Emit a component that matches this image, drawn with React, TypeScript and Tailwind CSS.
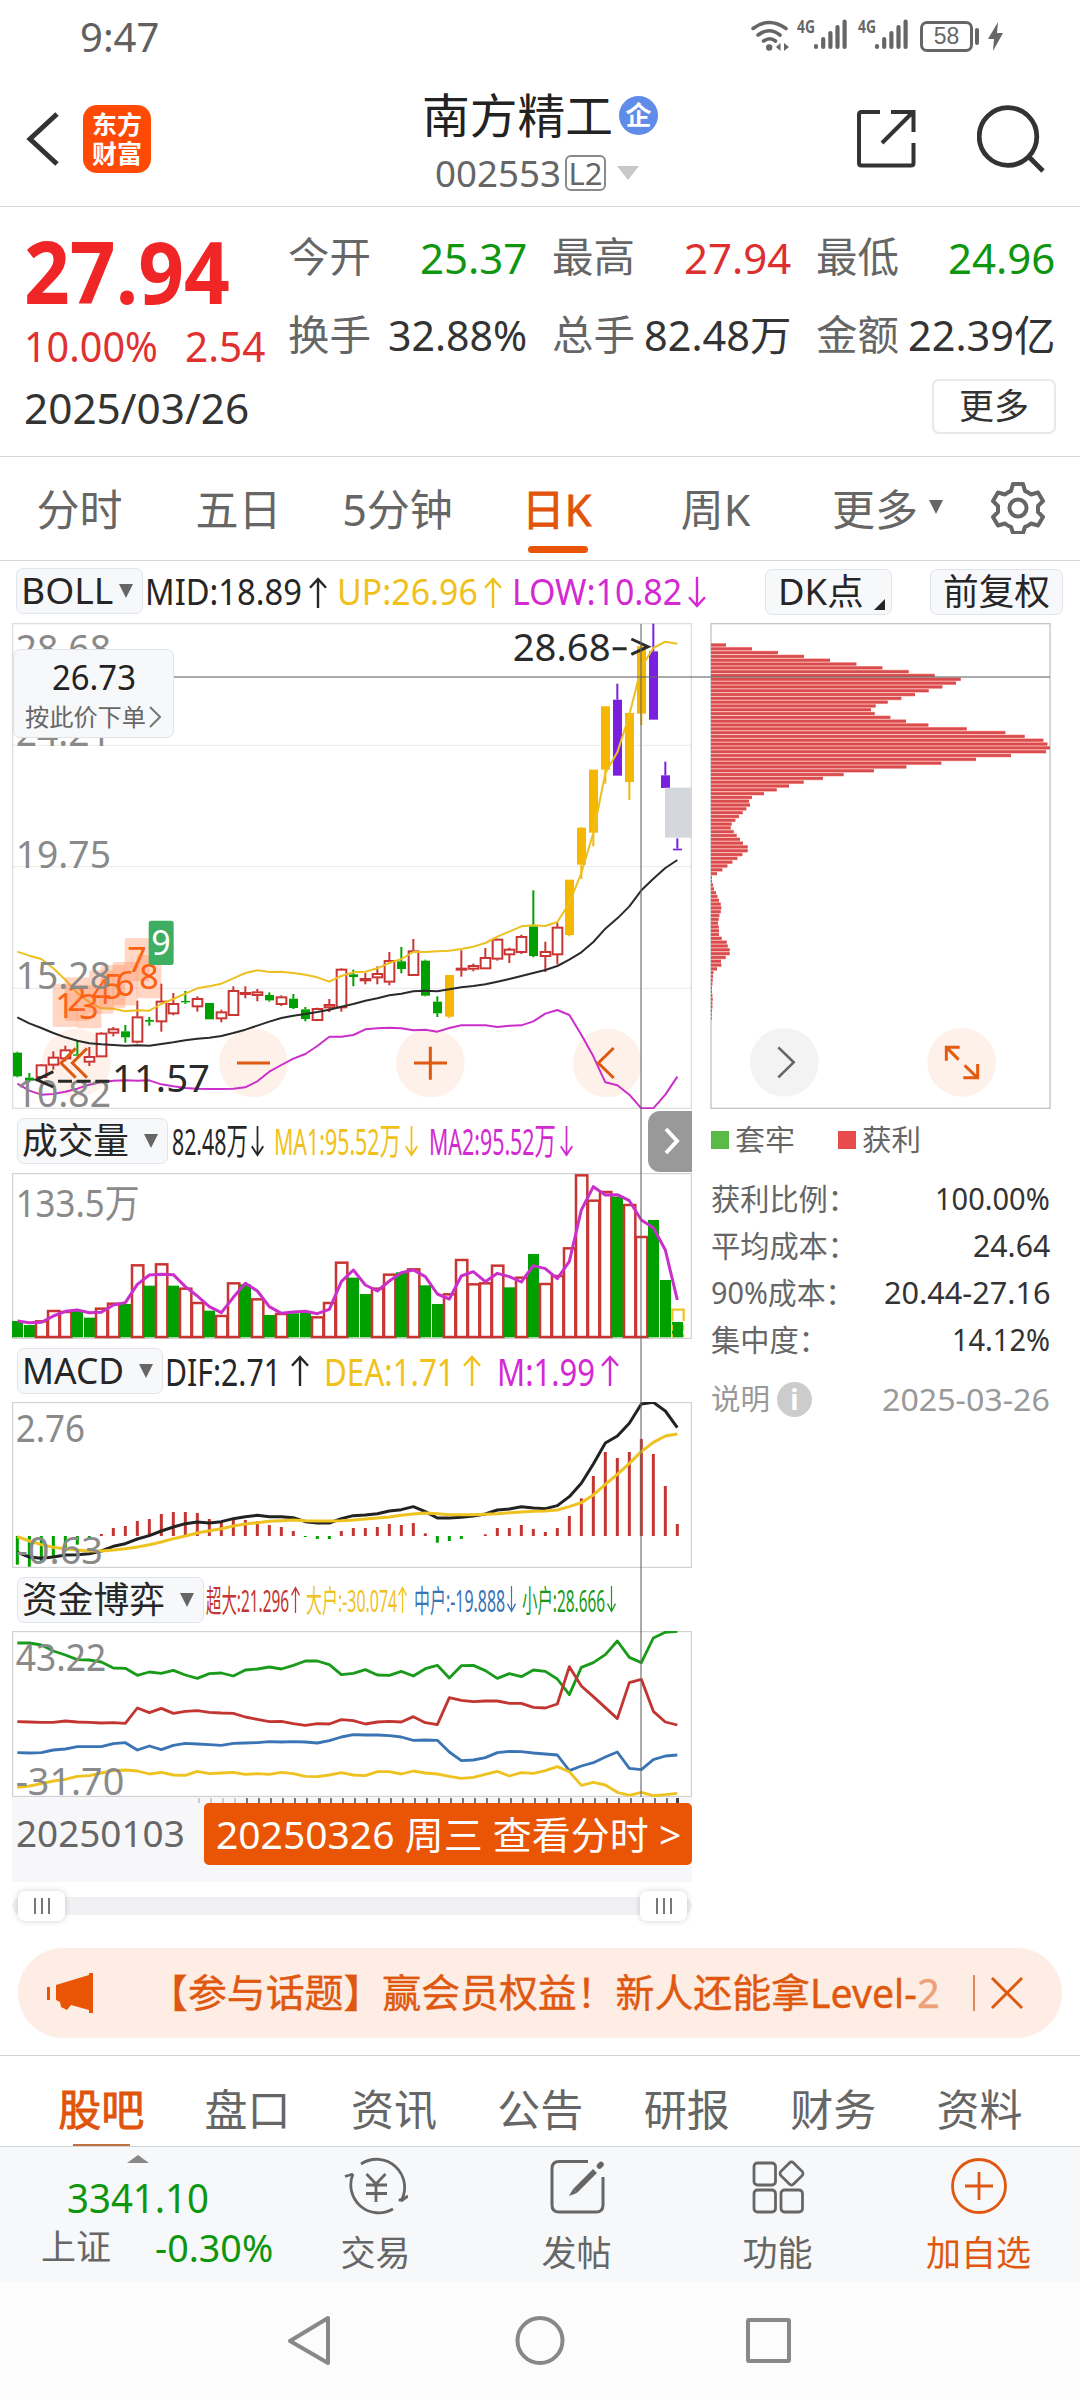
import { useLayoutEffect, useRef, type ReactNode } from "react";

// one line of text squeezed or stretched to a fixed width
function Fit({ w, className = "", children }: { w: number; className?: string; children: ReactNode }) {
  const ref = useRef<HTMLSpanElement>(null);

  useLayoutEffect(() => {
    const el = ref.current;
    if (el) el.style.transform = `scaleX(${w / el.offsetWidth})`;
  }, [w, children]);

  return (
    <span className={`inline-block shrink-0 ${className}`} style={{ width: w }}>
      <span ref={ref} className="inline-block origin-left whitespace-nowrap">
        {children}
      </span>
    </span>
  );
}

// chart coordinates are in thirds of a pixel, candles are 36 units apart
const X0 = 52;
const STEP = 36;
const cx = (i: number) => X0 + i * STEP;
const line = (ys: number[]) => ys.map((y, i) => `${cx(i)},${y}`).join(" ");

type Candle = [string, number, number, number, number];

// kind, high, body top, body bottom, low
const candles: Candle[] = [
  ["g", 1326, 1329, 1400, 1403], ["g", 1390, 1404, 1413, 1418], ["r", 1363, 1365, 1404, 1404], ["r", 1325, 1342, 1367, 1380],
  ["r", 1308, 1320, 1348, 1355], ["g", 1292, 1334, 1338, 1340], ["r", 1312, 1340, 1358, 1369], ["r", 1268, 1270, 1342, 1342],
  ["r", 1252, 1257, 1271, 1280], ["g", 1246, 1265, 1283, 1299], ["r", 1173, 1221, 1298, 1301], ["g", 1222, 1231, 1236, 1248],
  ["r", 1122, 1174, 1237, 1266], ["r", 1150, 1181, 1213, 1217], ["g", 1144, 1174, 1178, 1183], ["r", 1160, 1166, 1192, 1206],
  ["g", 1180, 1180, 1229, 1229], ["r", 1200, 1206, 1228, 1238], ["r", 1130, 1142, 1218, 1218], ["r", 1130, 1148, 1155, 1166],
  ["r", 1138, 1146, 1158, 1175], ["g", 1148, 1156, 1172, 1176], ["r", 1157, 1161, 1185, 1189], ["g", 1153, 1167, 1195, 1198],
  ["g", 1192, 1199, 1228, 1235], ["r", 1194, 1196, 1233, 1233], ["r", 1168, 1184, 1195, 1207], ["r", 1076, 1078, 1195, 1206],
  ["g", 1080, 1094, 1102, 1130], ["r", 1090, 1106, 1114, 1124], ["r", 1070, 1091, 1105, 1124], ["r", 1027, 1052, 1118, 1127],
  ["g", 1012, 1055, 1078, 1091], ["r", 988, 1023, 1098, 1098], ["g", 1050, 1053, 1158, 1160], ["g", 1160, 1176, 1211, 1222],
  ["y", 1096, 1096, 1221, 1225], ["r", 1022, 1075, 1082, 1101], ["r", 1062, 1067, 1079, 1085], ["r", 1015, 1043, 1078, 1078],
  ["r", 987, 988, 1049, 1053], ["r", 1014, 1018, 1036, 1060], ["r", 975, 980, 1029, 1033], ["g", 842, 950, 1039, 1043],
  ["r", 996, 1025, 1041, 1087], ["r", 940, 952, 1036, 1064], ["y", 810, 810, 976, 980], ["y", 652, 654, 765, 808],
  ["y", 480, 480, 669, 710], ["y", 289, 290, 480, 522], ["p", 222, 270, 498, 498], ["y", 309, 310, 517, 571],
  ["y", 105, 110, 312, 346], ["p", 42, 125, 330, 330], ["p", 456, 497, 535, 535], ["p", 686, 717, 722, 722],
];

const upBand = [
  1026, 1038, 1048, 1076, 1110, 1150, 1178, 1196, 1197, 1205, 1202, 1203, 1183, 1168, 1152, 1136, 1130, 1122, 1106, 1090, 1082, 1087,
  1086, 1090, 1095, 1103, 1116, 1099, 1088, 1086, 1076, 1060, 1048, 1027, 1027, 1025, 1023, 1018, 1011, 1000, 981, 966, 950, 947, 949,
  937, 880, 790, 670, 490, 428, 316, 172, 115, 96, 102,
];
const midBand = [
  1223, 1241, 1255, 1270, 1283, 1293, 1301, 1304, 1306, 1308, 1307, 1308, 1303, 1298, 1292, 1287, 1284, 1279, 1270, 1260, 1248, 1236,
  1225, 1218, 1213, 1207, 1200, 1191, 1183, 1173, 1166, 1157, 1152, 1145, 1143, 1145, 1139, 1133, 1129, 1124, 1116, 1108, 1099, 1090,
  1081, 1069, 1050, 1028, 997, 957, 926, 890, 842, 807, 775, 751,
];
const lowBand = [
  1422, 1443, 1455, 1453, 1446, 1437, 1425, 1417, 1413, 1412, 1413, 1412, 1424, 1430, 1435, 1437, 1438, 1438, 1437, 1433, 1415, 1386,
  1366, 1347, 1333, 1309, 1281, 1281, 1276, 1259, 1256, 1254, 1256, 1262, 1260, 1266, 1255, 1247, 1247, 1247, 1252, 1248, 1247, 1235,
  1212, 1201, 1216, 1275, 1340, 1418, 1427, 1455, 1496, 1496, 1455, 1401,
];

const volumes: [string, number][] = [
  ["g", 663], ["g", 675], ["r", 660], ["r", 629], ["r", 632], ["g", 632], ["g", 653], ["r", 622], ["r", 607], ["g", 612],
  ["r", 492], ["g", 557], ["r", 489], ["g", 557], ["r", 562], ["r", 605], ["g", 632], ["r", 644], ["r", 546], ["g", 553],
  ["r", 594], ["g", 645], ["r", 638], ["g", 640], ["g", 638], ["r", 648], ["r", 605], ["r", 484], ["g", 533], ["g", 582],
  ["r", 562], ["r", 520], ["g", 517], ["r", 504], ["g", 556], ["g", 612], ["r", 579], ["r", 476], ["r", 549], ["r", 546],
  ["r", 493], ["g", 562], ["r", 529], ["g", 462], ["r", 548], ["r", 524], ["r", 441], ["r", 222], ["r", 298], ["r", 272],
  ["g", 290], ["r", 311], ["r", 407], ["g", 360], ["g", 540], ["g", 666],
];
const volumeMa = [
  663, 668, 667, 648, 634, 630, 638, 637, 615, 608, 553, 525, 523, 524, 560, 588, 620, 638, 592, 550, 573, 620, 640, 636, 634, 641,
  628, 545, 510, 555, 573, 543, 518, 510, 530, 582, 597, 528, 515, 545, 520, 530, 546, 497, 506, 536, 484, 330, 260, 285, 284, 302,
  360, 383, 450, 600,
];

const macdBars = [
  674, 680, 665, 648, 630, 614, 600, 582, 564, 558, 543, 537, 522, 516, 516, 519, 537, 546, 540, 540, 543, 555, 561, 573, 591, 597,
  597, 573, 564, 564, 561, 552, 555, 549, 580, 608, 603, 597, 588, 583, 564, 564, 555, 567, 576, 564, 528, 475, 408, 336, 354, 336,
  297, 342, 438, 552,
];
const dif = [
  637, 651, 655, 651, 645, 644, 641, 633, 619, 611, 597, 587, 573, 561, 551, 546, 549, 545, 536, 530, 526, 530, 530, 533, 545, 549,
  549, 536, 527, 525, 521, 513, 509, 500, 515, 534, 534, 532, 528, 522, 510, 507, 500, 504, 506, 497, 470, 430, 372, 309, 288, 250,
  192, 187, 213, 263,
];
const dea = [
  590, 603, 614, 622, 627, 630, 633, 633, 630, 626, 621, 614, 606, 596, 588, 579, 572, 566, 558, 552, 548, 544, 542, 540, 542, 543,
  543, 542, 540, 537, 534, 531, 526, 522, 519, 521, 524, 524, 524, 523, 521, 518, 516, 514, 513, 510, 500, 488, 465, 433, 403, 370,
  335, 307, 288, 282,
];

const fundLines: [string, number[]][] = [
  ["#1a9a1a", [
    219, 219, 225, 243, 255, 269, 270, 276, 294, 295, 316, 306, 310, 301, 315, 325, 311, 309, 318, 300, 297, 291, 297, 286, 273, 273,
    284, 314, 310, 299, 315, 316, 304, 318, 296, 286, 324, 287, 286, 302, 325, 311, 320, 300, 304, 327, 374, 292, 278, 254, 213, 262,
    278, 204, 187, 184,
  ]],
  ["#c23531", [
    455, 456, 457, 457, 453, 456, 457, 459, 458, 460, 414, 428, 415, 430, 424, 422, 427, 429, 430, 441, 448, 455, 454, 461, 466, 461,
    462, 449, 452, 462, 456, 454, 456, 440, 458, 464, 383, 391, 395, 393, 393, 400, 400, 412, 414, 402, 290, 348, 380, 413, 446, 338,
    328, 424, 456, 465,
  ]],
  ["#3a74b4", [
    548, 549, 548, 540, 537, 530, 530, 530, 521, 518, 540, 528, 539, 526, 520, 522, 524, 526, 520, 519, 518, 515, 516, 515, 516, 519,
    512, 501, 494, 495, 495, 497, 501, 511, 510, 511, 546, 572, 570, 563, 548, 544, 545, 549, 552, 555, 602, 588, 578, 561, 546, 595,
    599, 569, 558, 555,
  ]],
  ["#eec21f", [
    652, 648, 641, 633, 628, 619, 617, 609, 602, 600, 603, 612, 607, 615, 616, 604, 611, 609, 607, 613, 611, 613, 607, 611, 619, 620,
    615, 608, 615, 617, 605, 605, 612, 603, 609, 612, 619, 625, 622, 613, 604, 618, 608, 610, 602, 590, 605, 646, 637, 645, 667, 676,
    667, 677, 674, 670,
  ]],
];

// right edge of every row of the cost distribution
const chips = [
  108, 186, 264, 342, 420, 499, 577, 656, 734, 812, 798, 757, 716, 675, 634, 593, 557, 543, 554, 601, 648, 715, 830, 946, 1004, 1060,
  1072, 1080, 1068, 963, 858, 754, 649, 552, 461, 399, 341, 297, 260, 222, 186, 177, 180, 169, 158, 147, 136, 125, 122, 131, 140, 150,
  159, 173, 173, 157, 142, 127, 112, 97, 81, 66, 66, 69, 72, 78, 82, 87, 92, 94, 92, 88, 86, 84, 86, 87, 87, 95, 110, 113, 119, 119,
  107, 93, 94, 81, 70, 69, 68, 67, 66, 66, 67, 68, 67, 67, 66, 65, 65,
];

// label, left, top
const sequence: [string, number, number][] = [
  ["1", 158, 1122], ["2", 194, 1103], ["3", 230, 1126], ["4", 267, 1082], ["5", 302, 1066], ["6", 338, 1057], ["7", 374, 985], ["8", 410, 1036],
];

const colors: Record<string, string> = { r: "#c93532", g: "#00a000", y: "#f5b700", p: "#7a1fe0" };

function ScaleLabel({ y, w, children }: { y: number; w: number; children: string }) {
  return (
    <text x="47" y={y} textLength={w} lengthAdjust="spacingAndGlyphs" fontSize="117" fill="#8a8a8a">
      {children}
    </text>
  );
}

function KChart() {
  return (
    <svg className="block h-[486px] w-[680px]" viewBox="36 40 2040 1458">
      <rect x="38" y="42" width="2036" height="1454" fill="none" stroke="#dedede" strokeWidth="4" />
      {[407, 771, 1136].map((y) => (
        <line key={y} x1="38" x2="2076" y1={y} y2={y} stroke="#d4d4d4" strokeWidth="3" strokeDasharray="3 3" />
      ))}
      <circle cx="229" cy="1360" r="103" fill="#fef1ea" />
      <circle cx="760" cy="1360" r="103" fill="#fef1ea" />
      <circle cx="1291" cy="1360" r="103" fill="#fef1ea" />
      <circle cx="1822" cy="1360" r="103" fill="#fef1ea" />

      {candles.map(([kind, high, top, bottom, low], i) => {
        const c = colors[kind];
        const x = cx(i);
        return (
          <g key={i}>
            <line x1={x} x2={x} y1={high} y2={top} stroke={c} strokeWidth="6" />
            <line x1={x} x2={x} y1={bottom} y2={low} stroke={c} strokeWidth="6" />
            {kind === "r" ? (
              <rect x={x - 14} y={top + 2} width="29" height={Math.max(bottom - top - 4, 2)} fill="#fff" stroke={c} strokeWidth="6" />
            ) : (
              <rect x={x - 13} y={top} width="27" height={bottom - top} fill={c} />
            )}
          </g>
        );
      })}
      <rect x="1995" y="534" width="81" height="150" fill="#d4d8dd" />

      <g fill="none" strokeWidth="6" strokeLinejoin="round">
        <polyline points={line(lowBand)} stroke="#cb2fcb" />
        <polyline points={line(midBand)} stroke="#2a2a2a" />
        <polyline points={line(upBand)} stroke="#ecc01f" />
      </g>

      {sequence.map(([n, x, y]) => (
        <g key={n}>
          <rect x={x} y={y} width="74" height="130" rx="5" fill="#ff7a3c" fillOpacity="0.3" />
          <text x={x + 37} y={y + 102} textAnchor="middle" fontSize="102" fill="#fb5f10">
            {n}
          </text>
        </g>
      ))}
      <rect x="446" y="933" width="75" height="133" rx="7" fill="#3fae63" />
      <text x="483" y="1037" textAnchor="middle" fontSize="102" fill="#fff">9</text>

      <ScaleLabel y={158} w={286}>28.68</ScaleLabel>
      <ScaleLabel y={408} w={286}>24.21</ScaleLabel>
      <ScaleLabel y={775} w={286}>19.75</ScaleLabel>
      <ScaleLabel y={1138} w={286}>15.28</ScaleLabel>
      <ScaleLabel y={1492} w={286}>10.82</ScaleLabel>

      <g fontSize="117" fill="#2a2a2a">
        <text x="1538" y="153" textLength="294" lengthAdjust="spacingAndGlyphs">28.68</text>
        <text x="336" y="1448" textLength="294" lengthAdjust="spacingAndGlyphs">11.57</text>
      </g>
      <g fill="none" stroke="#2a2a2a" strokeWidth="9">
        <path d="M1838 117h42M1894 88l50 23-50 23" />
        <path d="M160 1386l-50 24 50 22M174 1415h42M230 1415h42M286 1415h42" />
      </g>

      <g fill="none" stroke="#dc5a12" strokeWidth="9">
        <path d="M227 1316l-44 44 44 44M261 1316l-44 44 44 44" />
        <path d="M711 1360h99M1242 1360h99M1291 1311v99" />
        <path d="M1841 1315l-46 45 46 45" />
      </g>
    </svg>
  );
}

function VolumeChart() {
  return (
    <svg className="block h-[166px] w-[680px]" viewBox="36 219 2040 498">
      <rect x="38" y="221" width="2036" height="494" fill="none" stroke="#c9c9c9" strokeWidth="3" />
      <ScaleLabel y={352} w={372}>133.5万</ScaleLabel>
      {volumes.map(([kind, y], i) =>
        kind === "r" ? (
          <rect key={i} x={cx(i) - 16} y={y + 4} width="34" height={711 - y - 4} fill="#fff" stroke={colors.r} strokeWidth="7.5" />
        ) : (
          <rect key={i} x={cx(i) - 16} y={y} width="33" height={712 - y} fill={colors.g} />
        ),
      )}
      <path d="M2017 664V629h34v35" fill="none" stroke="#f0c52a" strokeWidth="7" />
      <path d="M2017 674v38M2051 674v38" stroke="#f0c52a" strokeWidth="4" strokeDasharray="18 9" />
      <polyline points={line(volumeMa)} fill="none" stroke="#cb2fcb" strokeWidth="9" strokeLinejoin="round" />
    </svg>
  );
}

function MacdChart() {
  return (
    <svg className="block h-[166px] w-[680px]" viewBox="36 186 2040 498">
      <rect x="38" y="188" width="2036" height="494" fill="none" stroke="#c9c9c9" strokeWidth="3" />
      {macdBars.map((y, i) => (
        <line key={i} x1={cx(i)} x2={cx(i)} y1="588" y2={y} stroke={y > 588 ? colors.g : "#c23531"} strokeWidth="9" />
      ))}
      <g fill="none" strokeWidth="9" strokeLinejoin="round">
        <polyline points={line(dif)} stroke="#222" />
        <polyline points={line(dea)} stroke="#eec21f" />
      </g>
      <ScaleLabel y={307} w={208}>2.76</ScaleLabel>
      <ScaleLabel y={672} w={262}>-0.63</ScaleLabel>
    </svg>
  );
}

function FundChart() {
  return (
    <svg className="block h-[166px] w-[680px]" viewBox="36 183 2040 498">
      <rect x="38" y="185" width="2036" height="494" fill="none" stroke="#c9c9c9" strokeWidth="3" />
      {fundLines.map(([color, ys]) => (
        <polyline key={color} points={line(ys)} fill="none" stroke={color} strokeWidth="8.5" strokeLinejoin="round" />
      ))}
      <ScaleLabel y={303} w={272}>43.22</ScaleLabel>
      <ScaleLabel y={675} w={326}>-31.70</ScaleLabel>
    </svg>
  );
}

function ChipChart() {
  return (
    <svg className="block h-[486px] w-[342px]" viewBox="60 42 1026 1458">
      <rect x="63" y="44" width="1017" height="1454" fill="none" stroke="#c4c4c4" strokeWidth="4" />
      {chips.map((end, i) => {
        const y = 108 + i * 11.43;
        return (
          <g key={i}>
            <rect x="63" y={y - 5.7} width={end - 63} height="11.43" fill="#fba9a6" />
            <rect x="63" y={y - 4} width={end - 63} height="8" fill="#d94c4d" />
          </g>
        );
      })}
      <circle cx="283" cy="1360" r="103" fill="#f3f3f3" />
      <path d="M265 1315l46 45-46 45" fill="none" stroke="#666" strokeWidth="8" />
      <circle cx="815" cy="1360" r="103" fill="#fef1ea" />
      <path d="M769 1355V1315h40M770 1316l36 36M863 1365v41h-43M860 1404l-36-35" fill="none" stroke="#e55a0c" strokeWidth="9" />
    </svg>
  );
}

function Caret({ className = "" }: { className?: string }) {
  return (
    <svg viewBox="0 0 14 14" className={`h-[14px] w-[14px] shrink-0 ${className}`}>
      <path d="M0 0h14L7 14z" fill="currentColor" />
    </svg>
  );
}

function Picker({ w, textW, children, className = "" }: { w: number; textW: number; children: string; className?: string }) {
  return (
    <div
      className={`flex h-[46px] shrink-0 items-center justify-between rounded-[7px] border border-[#e1e4ea] bg-[#f7f8fa] pr-[9px] pl-[4px] ${className}`}
      style={{ width: w }}
    >
      <Fit w={textW} className="text-[36px] leading-[44px] text-[#262626]">{children}</Fit>
      <Caret className="text-[#666]" />
    </div>
  );
}

function Arrow({ down = false, className = "" }: { down?: boolean; className?: string }) {
  return (
    <svg viewBox="0 0 18 32" preserveAspectRatio="none" className={`h-[31px] w-[18px] shrink-0 ${down ? "rotate-180" : ""} ${className}`}>
      <path d="M9 32V2M1 11l8-9 8 9" fill="none" stroke="currentColor" strokeWidth="2.4" />
    </svg>
  );
}

function Signal() {
  return (
    <svg viewBox="0 0 52 34" className="h-[34px] w-[52px] overflow-visible">
      <text x="0" y="15" fontSize="18" fontWeight="700" textLength="18" lengthAdjust="spacingAndGlyphs" fill="#666">4G</text>
      <g stroke="#666" strokeWidth="4.2" strokeLinecap="round">
        <path d="M19 29v-.8M26.200 29v-8M33.400 29V15M40.500 29V9M47.600 29V3.500" />
      </g>
    </svg>
  );
}

function StatusBar() {
  return (
    <div className="flex h-[80px] items-start pr-[77px] pl-[80px] text-[#666]">
      <Fit w={79} className="mt-[13px] text-[40px] leading-[48px] text-[#606060]">9:47</Fit>
      <svg viewBox="0 0 38 34" className="mt-[19px] ml-auto h-[34px] w-[38px]" fill="none" stroke="#666" strokeWidth="3.600" strokeLinecap="round">
        <path d="M2 9.500q16-12 33 0M7 16q11.500-8.500 22 0M12.500 22q6.500-4.500 12 0" />
        <circle cx="18.200" cy="28.500" r="3.200" fill="#666" stroke="none" />
        <path d="M29.500 24v8l-4.500-4zM33 24v8l5-4z" fill="#666" stroke="none" />
      </svg>
      <div className="mt-[18px] ml-[8px]"><Signal /></div>
      <div className="mt-[18px] ml-[9px]"><Signal /></div>
      <div className="mt-[21px] ml-[10px] flex h-[31px] w-[53px] items-center justify-center rounded-[7px] border-[3px] border-[#666]">
        <span className="text-[23px] leading-none font-['Liberation_Sans']">58</span>
      </div>
      <div className="mt-[28px] ml-[2px] h-[17px] w-[4px] rounded-full bg-[#666]" />
      <svg viewBox="0 0 15 29" className="mt-[22px] ml-[9px] h-[29px] w-[15px]">
        <path d="M10 0L0 17h6L5 29 15 11H9z" fill="#666" />
      </svg>
    </div>
  );
}

function Header() {
  return (
    <header className="flex h-[127px] items-start border-b border-[#d6d6d6] pl-[26px]">
      <svg viewBox="0 0 34 56" className="mt-[31px] h-[56px] w-[34px]">
        <path d="M31 3L4 28l27 25" fill="none" stroke="#333" strokeWidth="5" />
      </svg>
      <div className="mt-[25px] ml-[23px] flex h-[68px] w-[68px] flex-col items-center justify-center rounded-[14px] bg-[#ff4a06] text-[25px] leading-[29px] font-bold text-white">
        <span>东方</span>
        <span>财富</span>
      </div>
      <div className="ml-[271px] flex w-[240px] flex-col">
        <div className="flex items-center">
          <Fit w={191} className="text-[47px] leading-[70px] text-[#222]">南方精工</Fit>
          <span className="ml-[6px] flex h-[39px] w-[39px] items-center justify-center rounded-full bg-[#5f8ce8] text-[26px] leading-none font-bold text-white">
            企
          </span>
        </div>
        <div className="mt-[3px] flex items-center pl-[13px] text-[#666]">
          <Fit w={126} className="text-[37px] leading-[40px]">002553</Fit>
          <span className="ml-[4px] flex h-[36px] w-[41px] items-center justify-center rounded-[6px] border-2 border-[#8a8a8a]">
            <Fit w={34} className="text-[31px] leading-[32px]">L2</Fit>
          </span>
          <svg viewBox="0 0 22 14" className="ml-[11px] h-[14px] w-[22px]"><path d="M0 0h22L11 14z" fill="#c8c8c8" /></svg>
        </div>
      </div>
      <svg viewBox="0 0 60 60" className="mt-[29px] ml-[194px] h-[60px] w-[60px] shrink-0" fill="none" stroke="#333" strokeWidth="4">
        <path d="M24 3H5.500Q3 3 3 5.500V54q0 2.500 2.500 2.500H55q2.500 0 2.500-2.500V34M35 3h22.500V23M57 3L26 34" />
      </svg>
      <svg viewBox="0 0 70 70" className="mt-[24px] ml-[61px] h-[70px] w-[70px] shrink-0" fill="none" stroke="#333" strokeWidth="4.800">
        <circle cx="31" cy="32.500" r="28.800" />
        <path d="M52 53l14 14" />
      </svg>
    </header>
  );
}

const stats = [
  { label: "今开", value: "25.37", w: 107, color: "text-[#0f960f]" },
  { label: "最高", value: "27.94", w: 107, color: "text-[#dc3030]" },
  { label: "最低", value: "24.96", w: 107, color: "text-[#0f960f]" },
  { label: "换手", value: "32.88%", w: 139, color: "text-[#333]" },
  { label: "总手", value: "82.48万", w: 147, color: "text-[#333]" },
  { label: "金额", value: "22.39亿", w: 147, color: "text-[#333]" },
];

function Quote() {
  return (
    <section className="h-[250px] border-b border-[#d6d6d6] pr-[24px] pl-[24px]">
      <div className="flex">
        <div className="w-[264px] text-[#e03030]">
          <Fit w={206} className="mt-[18px] text-[86px] leading-[92px] font-bold text-[#f02525]">27.94</Fit>
          <div className="flex text-[41px] leading-[58px]">
            <Fit w={134}>10.00%</Fit>
            <Fit w={80} className="ml-[27px]">2.54</Fit>
          </div>
        </div>
        <div className="mt-[13px] grid grid-cols-[239px_239px_239px] gap-x-[25px]">
          {stats.map((s) => (
            <div key={s.label} className="flex h-[74px] items-center justify-between text-[42px]">
              <Fit w={83} className="text-[41px] text-[#666]">{s.label}</Fit>
              <Fit w={s.w} className={s.color}>{s.value}</Fit>
            </div>
          ))}
        </div>
      </div>
      <div className="mt-[3px] flex items-center justify-between">
        <Fit w={225} className="text-[41px] leading-[60px] text-[#333]">2025/03/26</Fit>
        <button className="h-[55px] w-[124px] -translate-y-[2px] rounded-[7px] border-2 border-[#e8e8e8] text-[35px] leading-[48px] text-[#333]">更多</button>
      </div>
    </section>
  );
}

function PeriodTabs() {
  const tabs = ["分时", "五日", "5分钟", "日K", "周K"];
  return (
    <nav className="flex h-[104px] items-center border-b border-[#d6d6d6] pt-[4px] text-[43px] text-[#666]">
      {tabs.map((t) =>
        t === "日K" ? (
          <div key={t} className="relative w-[159px] text-center text-[#e0550b] [-webkit-text-stroke:0.8px]">
            {t}
            <span className="absolute -bottom-[10px] left-[51px] h-[7px] w-[60px] rounded-full bg-[#e95504]" />
          </div>
        ) : (
          <div key={t} className="w-[159px] text-center">{t}</div>
        ),
      )}
      <span className="ml-[37px]">更多</span>
      <Caret className="ml-[11px] mb-[8px]" />
      <svg viewBox="0 0 54 54" className="mb-[8px] ml-[48px] h-[54px] w-[54px]" fill="none" stroke="#666" strokeWidth="4" strokeLinejoin="round">
        <path d="M22 4h10l2 7q3 1 6 3.500l7-2 5 8.500-5 5v6l5 5-5 8.500-7-2q-3 2.500-6 3.500l-2 6H22l-2-6q-3-1-6-3.500l-7 2-5-8.500 5-5v-6l-5-5 5-8.500 7 2q3-2.500 6-3.500z" />
        <circle cx="27" cy="28" r="8.500" />
      </svg>
    </nav>
  );
}

function MainIndicators() {
  return (
    <div className="flex h-[62px] items-start pt-[7px] text-[36px] leading-[44px]">
      <Picker w={127} textW={92} className="ml-[16px]">BOLL</Picker>
      <div className="flex h-[46px] items-center pt-[2px]">
        <Fit w={157} className="ml-[2px] text-[#262626]">MID:18.89</Fit>
        <Arrow className="ml-[7px] text-[#262626]" />
        <Fit w={141} className="ml-[10px] text-[#f0c11b]">UP:26.96</Fit>
        <Arrow className="ml-[6px] text-[#f0c11b]" />
        <Fit w={170} className="ml-[10px] text-[#d329d3]">LOW:10.82</Fit>
        <Arrow down className="ml-[6px] text-[#d329d3]" />
      </div>
      <div className="mt-[1px] ml-[59px] flex h-[46px] w-[127px] shrink-0 rounded-[7px] border border-[#e1e4ea] bg-[#f7f8fa] pl-[12px]">
        <Fit w={86} className="text-[#262626]">DK点</Fit>
        <svg viewBox="0 0 11 11" className="mt-[29px] ml-[10px] h-[11px] w-[11px]"><path d="M11 0v11H0z" fill="#262626" /></svg>
      </div>
      <div className="mt-[1px] ml-[38px] flex h-[46px] w-[133px] shrink-0 justify-center rounded-[7px] border border-[#e1e4ea] bg-[#f7f8fa] text-[#262626]">
        <Fit w={107}>前复权</Fit>
      </div>
    </div>
  );
}

function Charts() {
  return (
    <div className="w-[680px]">
      <div className="relative">
        <KChart />
        <div className="absolute top-[26px] left-px h-[89px] w-[161px] rounded-[7px] border border-[#dfe2e8] bg-[#f7f8fa]">
          <div className="flex justify-center pt-[7px]">
            <Fit w={84} className="text-[34px] leading-[40px] text-[#222]">26.73</Fit>
          </div>
          <div className="flex items-center pl-[11px] text-[#666]">
            <Fit w={121} className="text-[24px] leading-[40px]">按此价下单</Fit>
            <svg viewBox="0 0 12 22" className="ml-[3px] h-[22px] w-[12px]"><path d="M1 1l10 10L1 21" fill="none" stroke="#777" strokeWidth="2" /></svg>
          </div>
        </div>
      </div>

      <div className="flex h-[64px] items-center pl-[5px] text-[37px] leading-[44px]">
        <Picker w={151} textW={107}>成交量</Picker>
        <Fit w={76} className="ml-[4px] text-[#262626]">82.48万</Fit>
        <Arrow down className="ml-[3px] w-[13px]! text-[#262626]" />
        <Fit w={127} className="ml-[10px] text-[#f0c11b]">MA1:95.52万</Fit>
        <Arrow down className="ml-[4px] w-[13px]! text-[#f0c11b]" />
        <Fit w={127} className="ml-[11px] text-[#d329d3]">MA2:95.52万</Fit>
        <Arrow down className="ml-[4px] w-[13px]! text-[#d329d3]" />
        <div className="ml-auto flex h-[61px] w-[44px] items-center justify-center rounded-l-[12px] bg-[#999] pl-[3px]">
          <svg viewBox="0 0 18 30" className="h-[30px] w-[18px]"><path d="M3 3l11 12L3 27" fill="none" stroke="#fff" strokeWidth="4" /></svg>
        </div>
      </div>
      <VolumeChart />

      <div className="flex h-[63px] items-center pl-[5px] text-[38px] leading-[44px]">
        <Picker w={146} textW={102}>MACD</Picker>
        <Fit w={116} className="ml-[2px] text-[#262626]">DIF:2.71</Fit>
        <Arrow className="ml-[10px] text-[#262626]" />
        <Fit w={131} className="ml-[15px] text-[#f0c11b]">DEA:1.71</Fit>
        <Arrow className="ml-[8px] text-[#f0c11b]" />
        <Fit w={98} className="ml-[16px] text-[#d329d3]">M:1.99</Fit>
        <Arrow className="ml-[6px] text-[#d329d3]" />
      </div>
      <MacdChart />

      <div className="flex h-[63px] items-center pl-[5px] text-[31px] leading-[44px]">
        <Picker w={187} textW={143}>资金博弈</Picker>
        <Fit w={83} className="ml-[2px] text-[#c23531]">超大:21.296</Fit>
        <Arrow className="ml-[2px] h-[27px]! w-[9px]! text-[#c23531]" />
        <Fit w={91} className="ml-[6px] text-[#eec21f]">大户:-30.074</Fit>
        <Arrow className="ml-[1px] h-[27px]! w-[9px]! text-[#eec21f]" />
        <Fit w={91} className="ml-[7px] text-[#3a74b4]">中户:-19.888</Fit>
        <Arrow down className="ml-[2px] h-[27px]! w-[9px]! text-[#3a74b4]" />
        <Fit w={83} className="ml-[6px] text-[#1a9a1a]">小户:28.666</Fit>
        <Arrow down className="ml-[2px] h-[27px]! w-[9px]! text-[#1a9a1a]" />
      </div>
      <FundChart />

      <div className="h-[85px] bg-[#f7f7fa]">
        <svg viewBox="0 0 680 6" className="block h-[6px] w-[680px]">
          {Array.from({ length: 40 }, (_, i) => (
            <rect key={i} x={197 + i * 12 - 11} y="1" width={i === 10 ? 3 : 2} height="5" fill={i < 4 ? "#ccc" : "#777"} />
          ))}
          <rect x="664" y="1" width="3" height="5" fill="#444" />
        </svg>
        <div className="flex items-center">
          <Fit w={169} className="ml-[4px] text-[36px] text-[#666]">20250103</Fit>
          <div className="ml-[19px] flex h-[62px] w-[488px] items-center rounded-[5px] bg-[#e95504] pl-[12px] text-white">
            <Fit w={465} className="text-[38px]">20250326 周三 查看分时 &gt;</Fit>
          </div>
        </div>
      </div>

      <div className="flex h-[48px] items-center">
        <div className="flex h-[18px] w-full items-center justify-between rounded-full bg-[#f1f1f4] pr-[5px] pl-[6px]">
          {["start", "end"].map((k) => (
            <div key={k} className="flex h-[30px] w-[47px] items-center justify-center gap-[5px] rounded-[7px] bg-white shadow-[0_0_6px_rgba(0,0,0,0.18)]">
              <i className="h-[16px] w-[2px] bg-[#777]" />
              <i className="h-[16px] w-[2px] bg-[#777]" />
              <i className="h-[16px] w-[2px] bg-[#777]" />
            </div>
          ))}
        </div>
      </div>
    </div>
  );
}

const costs = [
  { label: "获利比例：", lw: 146, value: "100.00%", w: 115 },
  { label: "平均成本：", lw: 146, value: "24.64", w: 77 },
  { label: "90%成本：", lw: 143, value: "20.44-27.16", w: 166 },
  { label: "集中度：", lw: 117, value: "14.12%", w: 98 },
];

function ChipPanel() {
  return (
    <div className="ml-[18px] w-[342px]">
      <ChipChart />
      <div className="mt-[8px] flex h-[46px] items-center pl-px text-[29px] text-[#666]">
        <i className="h-[18px] w-[18px] bg-[#5bb948]" />
        <Fit w={60} className="ml-[6px]">套牢</Fit>
        <i className="ml-[43px] h-[18px] w-[18px] bg-[#e84b4b]" />
        <Fit w={59} className="ml-[6px]">获利</Fit>
      </div>
      <div className="mt-[12px] pr-[2px] pl-px">
        {costs.map((c) => (
          <div key={c.label} className="flex h-[47px] items-center justify-between text-[30px]">
            <Fit w={c.lw} className="text-[#666]">{c.label}</Fit>
            <Fit w={c.w} className="text-[31px] text-[#333]">{c.value}</Fit>
          </div>
        ))}
      </div>
      <div className="mt-[13px] flex h-[46px] items-center pr-[2px] pl-px text-[29px] text-[#999]">
        <Fit w={59}>说明</Fit>
        <span className="ml-[7px] flex h-[35px] w-[35px] items-center justify-center rounded-full bg-[#ccc] text-[28px] leading-none font-bold text-white">i</span>
        <Fit w={168} className="ml-auto text-[31px]">2025-03-26</Fit>
      </div>
    </div>
  );
}

function Banner() {
  return (
    <div className="mx-[18px] mt-[18px] flex h-[90px] items-center rounded-full bg-[#fdede4] pl-[29px] text-[#e0580f]">
      <svg viewBox="0 0 46 40" className="h-[40px] w-[46px]">
        <path d="M0 14h3v13H0zM9 12L42 2V0h4v40h-4v-3l-18-5-4 5-6-3-1-5-4-2z" fill="#e95504" />
      </svg>
      <div className="ml-[56px] flex text-[39px] [-webkit-text-stroke:0.4px]">
        <Fit w={661}>【参与话题】赢会员权益！新人还能拿</Fit>
        <Fit w={107} className="text-[40px]">Level-</Fit>
        <Fit w={23} className="text-[40px] opacity-50">2</Fit>
      </div>
      <i className="ml-[33px] h-[36px] w-[2px] bg-[#e08a5c]" />
      <svg viewBox="0 0 34 34" className="ml-[15px] h-[34px] w-[34px]"><path d="M2 2l30 30M32 2L2 32" stroke="currentColor" strokeWidth="3" /></svg>
    </div>
  );
}

function InfoTabs() {
  return (
    <nav className="mt-[17px] flex h-[92px] border-t border-b border-[#d2d5d8] pl-[28px] text-[43px] leading-[107px] text-[#666]">
      {["股吧", "盘口", "资讯", "公告", "研报", "财务", "资料"].map((t, i) =>
        i === 0 ? (
          <div key={t} className="relative w-[146.4px] text-center text-[#e0550b] [-webkit-text-stroke:0.9px]">
            {t}
            <span className="absolute bottom-0 left-[45px] h-[2px] w-[57px] bg-[#c07040]" />
          </div>
        ) : (
          <div key={t} className="w-[146.4px] text-center">{t}</div>
        ),
      )}
    </nav>
  );
}

const actions = [
  {
    label: "交易",
    icon: (
      <g strokeWidth="2.800">
        <path d="M17 10A28 28 0 0 1 57 47M57 47l-2-2M57 47l7-5M49 55A28 28 0 0 1 9 20M9 20l-8 2.500" />
        <path d="M22.500 20L32 30l9.500-10M32 30v18M22 31h21M22 39.500h21" />
      </g>
    ),
  },
  {
    label: "发帖",
    icon: (
      <g strokeWidth="3">
        <path d="M43 7.500H14q-7 0-7 7V51q0 7 7 7h37q7 0 7-7V23" />
        <path d="M50 17L30 37" strokeWidth="5.500" />
        <path d="M28 35l4 4-8 3z" fill="currentColor" stroke="none" />
        <path d="M54.500 12l1.500-1.500" strokeWidth="5.500" strokeLinecap="round" />
      </g>
    ),
  },
  {
    label: "功能",
    icon: (
      <g strokeWidth="2.800">
        <rect x="8" y="9" width="21.500" height="22" rx="3.500" />
        <rect x="8" y="36" width="21.500" height="22" rx="3.500" />
        <rect x="35" y="36" width="21.500" height="22" rx="3.500" />
        <rect x="36.500" y="10.500" width="18" height="18" rx="3" transform="rotate(45 45.500 19.500)" />
      </g>
    ),
  },
  {
    label: "加自选",
    icon: (
      <g strokeWidth="2.800">
        <circle cx="32" cy="32" r="26.500" />
        <path d="M18 32h28M32 18v28" />
      </g>
    ),
  },
];

function BottomBar() {
  return (
    <div className="flex h-[135px] bg-[#f7f8fa]">
      <div className="w-[275px]">
        <svg viewBox="0 0 22 8" className="mt-[8px] ml-[127px] block h-[8px] w-[22px]"><path d="M11 0l11 8H0z" fill="#888" /></svg>
        <div className="mt-[8px] ml-[67px] text-[#0f960f]">
          <Fit w={142} className="text-[40px] leading-[54px]">3341.10</Fit>
        </div>
        <div className="flex items-center">
          <Fit w={70} className="ml-[41px] text-[35px] leading-[44px] text-[#666]">上证</Fit>
          <Fit w={118} className="ml-[44px] text-[38px] leading-[44px] text-[#0f960f]">-0.30%</Fit>
        </div>
      </div>
      {actions.map((a, i) => (
        <div key={a.label} className={`flex w-[201px] flex-col items-center text-[35px] leading-[44px] ${i === 3 ? "text-[#e0580f]" : "text-[#666]"}`}>
          <svg viewBox="0 0 64 64" className="mt-[7px] h-[64px] w-[64px]" fill="none" stroke="currentColor">{a.icon}</svg>
          <span className="mt-[13px]">{a.label}</span>
        </div>
      ))}
    </div>
  );
}

export default function App() {
  return (
    <div className="h-[2400px] w-[1080px] overflow-hidden bg-white font-['Noto_Sans','Noto_Sans_CJK_SC',sans-serif]">
      <StatusBar />
      <Header />
      <Quote />
      <PeriodTabs />
      <MainIndicators />

      <div className="relative flex pl-[12px]">
        <Charts />
        <ChipPanel />
        {/* crosshair */}
        <i className="absolute top-[1px] left-[640px] h-[1173px] w-[2px] bg-[#666]/55" />
        <i className="absolute top-[53px] left-[174px] h-[2px] w-[876px] bg-[#666]/55" />
      </div>

      <Banner />
      <InfoTabs />
      <BottomBar />

      <div className="flex h-[118px] justify-center bg-[#fcfcfc] pt-[32px]">
        <svg viewBox="0 0 506 52" className="h-[52px] w-[506px]" fill="none" stroke="#888" strokeWidth="4" strokeLinejoin="round">
          <path d="M41 4v45L3 27z" />
          <circle cx="253" cy="26.500" r="22.500" />
          <rect x="461" y="6" width="41" height="41" rx="1" />
        </svg>
      </div>
    </div>
  );
}
